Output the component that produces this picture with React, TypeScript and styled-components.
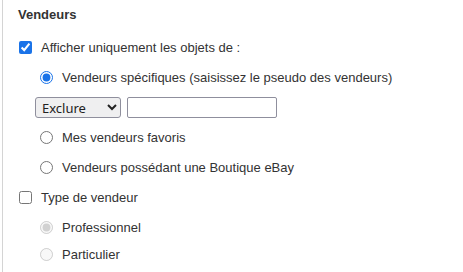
import React from "react";
import styled, { createGlobalStyle } from "styled-components";

const Global = createGlobalStyle`
  html, body { margin: 0; padding: 0; background: #fff; }
  body { font-family: "Liberation Sans", Arial, sans-serif; color: #333; }
`;

const Panel = styled.section`
  margin-left: 2px;
  border-left: 1px solid #d4d4d4;
  padding: 5px 0 12px 14px;
  min-height: 272px;
  box-sizing: border-box;
`;

const Title = styled.h3`
  margin: 0;
  padding-left: 1px;
  font-size: 13px;
  line-height: 19px;
  font-weight: bold;
  color: #333;
`;

const List = styled.div`
  margin-top: 8px;
  display: flex;
  flex-direction: column;
`;

const Row = styled.label<{ $indent?: number; $h?: number }>`
  display: flex;
  align-items: center;
  height: ${(p) => p.$h ?? 30}px;
  padding-left: ${(p) => p.$indent ?? 0}px;
  font-size: 13px;
  color: #333;
  gap: 9px;
`;

const Check = styled.input`
  margin: 0;
  width: 13px;
  height: 13px;
  accent-color: #1a73e8;
`;

const Radio = styled.input`
  margin: 0;
  width: 13px;
  height: 13px;
  accent-color: #1a73e8;
`;

const Muted = styled.span<{ $muted?: boolean }>`
  color: ${(p) => (p.$muted ? "#444" : "#333")};
`;

const FieldRow = styled.div`
  display: flex;
  align-items: center;
  height: 30px;
  padding-left: 18px;
  gap: 6px;
`;

const Select = styled.select`
  box-sizing: border-box;
  width: 86px;
  height: 21px;
  margin: 0;
  font-family: "Noto Sans", "Open Sans", sans-serif;
  font-size: 13px;
  color: #222;
  background: #efeff0;
  border: 1px solid #8f8f9d;
  border-radius: 3px;
  padding: 0 2px;
`;

const TextInput = styled.input`
  box-sizing: border-box;
  width: 150px;
  height: 21px;
  margin: 0;
  border: 1px solid #8f8f9d;
  border-radius: 2px;
  font-size: 13px;
`;

export default function App() {
  return (
    <>
      <Global />
      <Panel>
        <Title>Vendeurs</Title>
        <List>
          <Row $indent={2}>
            <Check type="checkbox" defaultChecked />
            <span>Afficher uniquement les objets de :</span>
          </Row>
          <Row $indent={23}>
            <Radio type="radio" name="v" defaultChecked />
            <span>Vendeurs spécifiques (saisissez le pseudo des vendeurs)</span>
          </Row>
          <FieldRow>
            <Select defaultValue="Exclure">
              <option>Exclure</option>
              <option>Inclure</option>
            </Select>
            <TextInput type="text" />
          </FieldRow>
          <Row $indent={23}>
            <Radio type="radio" name="v" />
            <span>Mes vendeurs favoris</span>
          </Row>
          <Row $indent={23}>
            <Radio type="radio" name="v" />
            <span>Vendeurs possédant une Boutique eBay</span>
          </Row>
          <Row $indent={2}>
            <Check type="checkbox" />
            <span>Type de vendeur</span>
          </Row>
          <Row $indent={23}>
            <Radio type="radio" name="t" disabled defaultChecked />
            <Muted>Professionnel</Muted>
          </Row>
          <Row $indent={23} $h={24}>
            <Radio type="radio" name="t" disabled />
            <Muted>Particulier</Muted>
          </Row>
        </List>
      </Panel>
    </>
  );
}
